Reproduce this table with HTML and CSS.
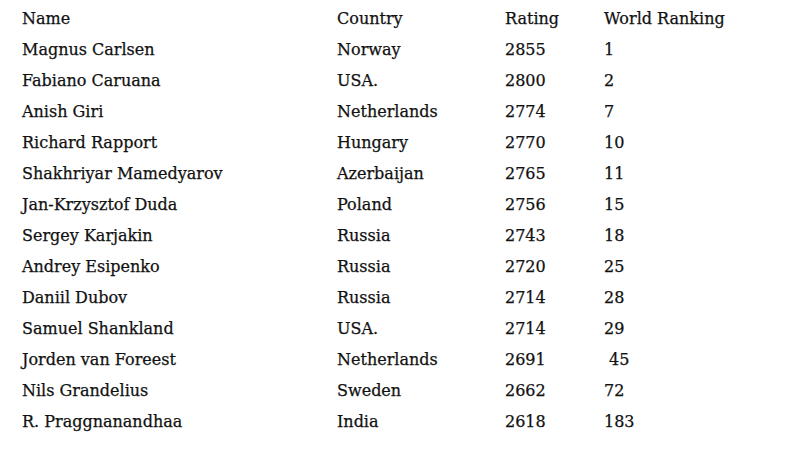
FILE: index.html
```html
<!DOCTYPE html>
<html>
<head>
<meta charset="utf-8">
<link rel="stylesheet" href="styles.css">
</head>
<body>
<div class="table">
  <div class="row"><span>Name</span><span>Country</span><span>Rating</span><span>World Ranking</span></div>
  <div class="row"><span>Magnus Carlsen</span><span>Norway</span><span>2855</span><span>1</span></div>
  <div class="row"><span>Fabiano Caruana</span><span>USA.</span><span>2800</span><span>2</span></div>
  <div class="row"><span>Anish Giri</span><span>Netherlands</span><span>2774</span><span>7</span></div>
  <div class="row"><span>Richard Rapport</span><span>Hungary</span><span>2770</span><span>10</span></div>
  <div class="row"><span>Shakhriyar Mamedyarov</span><span>Azerbaijan</span><span>2765</span><span>11</span></div>
  <div class="row"><span>Jan-Krzysztof Duda</span><span>Poland</span><span>2756</span><span>15</span></div>
  <div class="row"><span>Sergey Karjakin</span><span>Russia</span><span>2743</span><span>18</span></div>
  <div class="row"><span>Andrey Esipenko</span><span>Russia</span><span>2720</span><span>25</span></div>
  <div class="row"><span>Daniil Dubov</span><span>Russia</span><span>2714</span><span>28</span></div>
  <div class="row"><span>Samuel Shankland</span><span>USA.</span><span>2714</span><span>29</span></div>
  <div class="row"><span>Jorden van Foreest</span><span>Netherlands</span><span>2691</span><span>&nbsp;45</span></div>
  <div class="row"><span>Nils Grandelius</span><span>Sweden</span><span>2662</span><span>72</span></div>
  <div class="row"><span>R. Praggnanandhaa</span><span>India</span><span>2618</span><span>183</span></div>
</div>
</body>
</html>
```
FILE: styles.css
```css
html, body {
  margin: 0;
  padding: 0;
  background: #fff;
}
body {
  font-family: "DejaVu Serif", "Liberation Serif", serif;
  font-size: 16px;
  color: #111;
  -webkit-text-stroke: 0.25px #111;
}
.table {
  padding: 3px 0 0 22px;
  display: flex;
  flex-direction: column;
}
.row {
  display: grid;
  grid-template-columns: 315px 168px 99px 150px;
  height: 31px;
  line-height: 31px;
  white-space: pre;
}
```
